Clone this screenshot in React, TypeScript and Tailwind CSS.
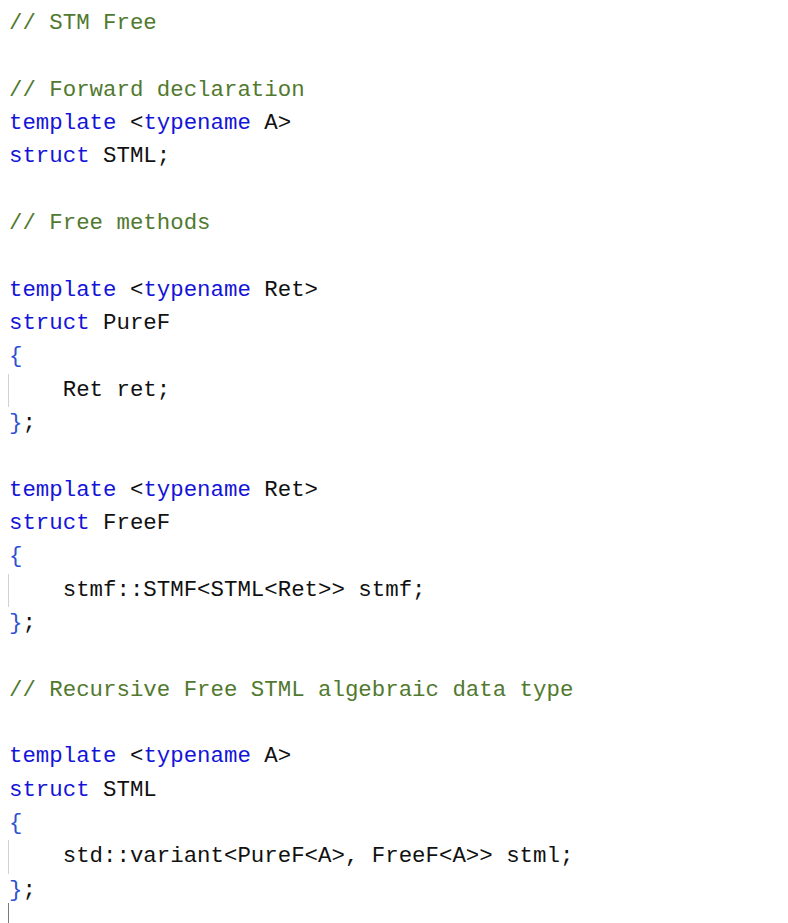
type Kind = 'c' | 'k' | 'b' | 't';
type Token = [string, Kind];

const color: Record<Kind, string> = {
  c: 'text-[#51792f]',
  k: 'text-[#1414d8]',
  b: 'text-[#2f50cf]',
  t: 'text-[#111111]',
};

// each line: tokens, and whether it sits inside a brace block (indent guide)
const lines: { tokens: Token[]; guide?: boolean }[] = [
  { tokens: [['// STM Free', 'c']] },
  { tokens: [] },
  { tokens: [['// Forward declaration', 'c']] },
  { tokens: [['template', 'k'], [' <', 't'], ['typename', 'k'], [' A>', 't']] },
  { tokens: [['struct', 'k'], [' STML;', 't']] },
  { tokens: [] },
  { tokens: [['// Free methods', 'c']] },
  { tokens: [] },
  { tokens: [['template', 'k'], [' <', 't'], ['typename', 'k'], [' Ret>', 't']] },
  { tokens: [['struct', 'k'], [' PureF', 't']] },
  { tokens: [['{', 'b']] },
  { tokens: [['    Ret ret;', 't']], guide: true },
  { tokens: [['}', 'b'], [';', 't']] },
  { tokens: [] },
  { tokens: [['template', 'k'], [' <', 't'], ['typename', 'k'], [' Ret>', 't']] },
  { tokens: [['struct', 'k'], [' FreeF', 't']] },
  { tokens: [['{', 'b']] },
  { tokens: [['    stmf::STMF<STML<Ret>> stmf;', 't']], guide: true },
  { tokens: [['}', 'b'], [';', 't']] },
  { tokens: [] },
  { tokens: [['// Recursive Free STML algebraic data type', 'c']] },
  { tokens: [] },
  { tokens: [['template', 'k'], [' <', 't'], ['typename', 'k'], [' A>', 't']] },
  { tokens: [['struct', 'k'], [' STML', 't']] },
  { tokens: [['{', 'b']] },
  { tokens: [['    std::variant<PureF<A>, FreeF<A>> stml;', 't']], guide: true },
  { tokens: [['}', 'b'], [';', 't']] },
];

export default function App() {
  return (
    <div
      className="w-[788px] h-[923px] overflow-hidden bg-white pt-[7px] pl-[8px] text-[22.4px] leading-[33.33px] whitespace-pre"
      style={{ fontFamily: '"Liberation Mono", "DejaVu Sans Mono", monospace' }}
    >
      {lines.map((line, i) => (
        <div key={i} className="flex h-[33.33px]">
          <span className={line.guide ? 'w-px bg-[#d2d2d2]' : 'w-px'} />
          <span>
            {line.tokens.map(([text, kind], j) => (
              <span key={j} className={color[kind]}>
                {text}
              </span>
            ))}
          </span>
        </div>
      ))}
      {/* caret on the last line */}
      <div className="flex h-[33.33px]">
        <span className="w-px h-[22px] -mt-[4px] bg-[#7a7a7a]" />
      </div>
    </div>
  );
}
